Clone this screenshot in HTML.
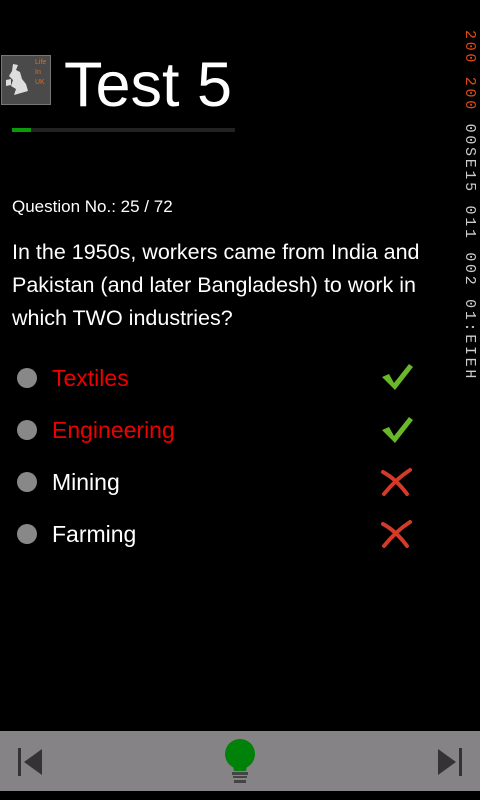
<!DOCTYPE html>
<html><head><style>
body{margin:0;width:480px;height:800px;background:#000;overflow:hidden;position:relative;font-family:"Liberation Sans",sans-serif;color:#fff}
.a{position:absolute}
.opt{position:absolute;left:52px;font-size:23px}
.dot{position:absolute;left:17px;width:20px;height:20px;border-radius:50%;background:#888}
</style></head><body>
<div class="a" style="left:1px;top:55px;width:48px;height:48px;background:#4a4a4a;border:1px solid #777"></div>
<svg class="a" style="left:4px;top:62px" width="26" height="36" viewBox="0 0 26 36"><path d="M9 2 L14 3 L12 8 L16 10 L18 17 L22 22 L24 29 L17 31 L10 33 L12 27 L7 24 L9 18 L5 14 L8 9 Z M2 18 L7 17 L7 23 L2 24 Z" fill="#ddd"/></svg>
<div class="a" style="left:35px;top:58px;font-size:7px;color:#e06a1a;line-height:10px">Life<br>In<br>UK</div>
<div class="a" style="left:64px;top:45px;font-size:63px;line-height:80px">Test 5</div>
<div class="a" style="left:12px;top:128px;width:223px;height:4px;background:#222"></div>
<div class="a" style="left:12px;top:128px;width:19px;height:4px;background:#0a9a0a"></div>
<div class="a" style="left:12px;top:197px;font-size:17px">Question No.: 25 / 72</div>
<div class="a" style="left:12px;top:236px;width:455px;font-size:21.5px;line-height:33px">In the 1950s, workers came from India and Pakistan (and later Bangladesh) to work in which TWO industries?</div>
<div class="a" style="left:456px;top:30px;width:380px;transform-origin:0 0;transform:rotate(90deg) translate(0,-22px);font-family:'Liberation Mono',monospace;font-size:15px;color:#ccc;white-space:nowrap;letter-spacing:2.7px"><span style="color:#e04a10">200 200 </span>00SE15 011 002 01:EIEH</div>
<div class="dot" style="top:368px"></div><div class="opt" style="top:365px;color:#e00">Textiles</div>
<div class="dot" style="top:420px"></div><div class="opt" style="top:417px;color:#e00">Engineering</div>
<div class="dot" style="top:472px"></div><div class="opt" style="top:469px">Mining</div>
<div class="dot" style="top:524px"></div><div class="opt" style="top:521px">Farming</div>
<svg class="a" style="left:380px;top:362px" width="34" height="30"><path d="M2 15 L9 12 L14 21 L29 2 L33 5 L15 28 Z" fill="#6ab82a"/></svg>
<svg class="a" style="left:380px;top:415px" width="34" height="30"><path d="M2 15 L9 12 L14 21 L29 2 L33 5 L15 28 Z" fill="#6ab82a"/></svg>
<svg class="a" style="left:380px;top:467px" width="32" height="30"><path d="M3 5 Q16 12 27 27 M30 3 Q16 12 4 27" stroke="#d23a2a" stroke-width="4" fill="none" stroke-linecap="round"/></svg>
<svg class="a" style="left:380px;top:519px" width="32" height="30"><path d="M3 5 Q16 12 27 27 M30 3 Q16 12 4 27" stroke="#d23a2a" stroke-width="4" fill="none" stroke-linecap="round"/></svg>
<div class="a" style="left:0;top:731px;width:480px;height:60px;background:#858385"></div>
<svg class="a" style="left:18px;top:747px" width="26" height="32"><rect x="0" y="1" width="3" height="28" fill="#333"/><path d="M24 2 L24 28 L6 15 Z" fill="#333"/></svg>
<svg class="a" style="left:436px;top:747px" width="26" height="32"><rect x="23" y="1" width="3" height="28" fill="#333"/><path d="M2 2 L2 28 L20 15 Z" fill="#333"/></svg>
<svg class="a" style="left:224px;top:739px" width="32" height="46"><circle cx="16" cy="15" r="15" fill="#00820a"/><path d="M8 22 L24 22 L22 32 L10 32 Z" fill="#00820a"/><rect x="8" y="33" width="16" height="3" fill="#444"/><rect x="9" y="37" width="14" height="2" fill="#444"/><rect x="10" y="41" width="12" height="3" fill="#444"/></svg>
</body></html>
